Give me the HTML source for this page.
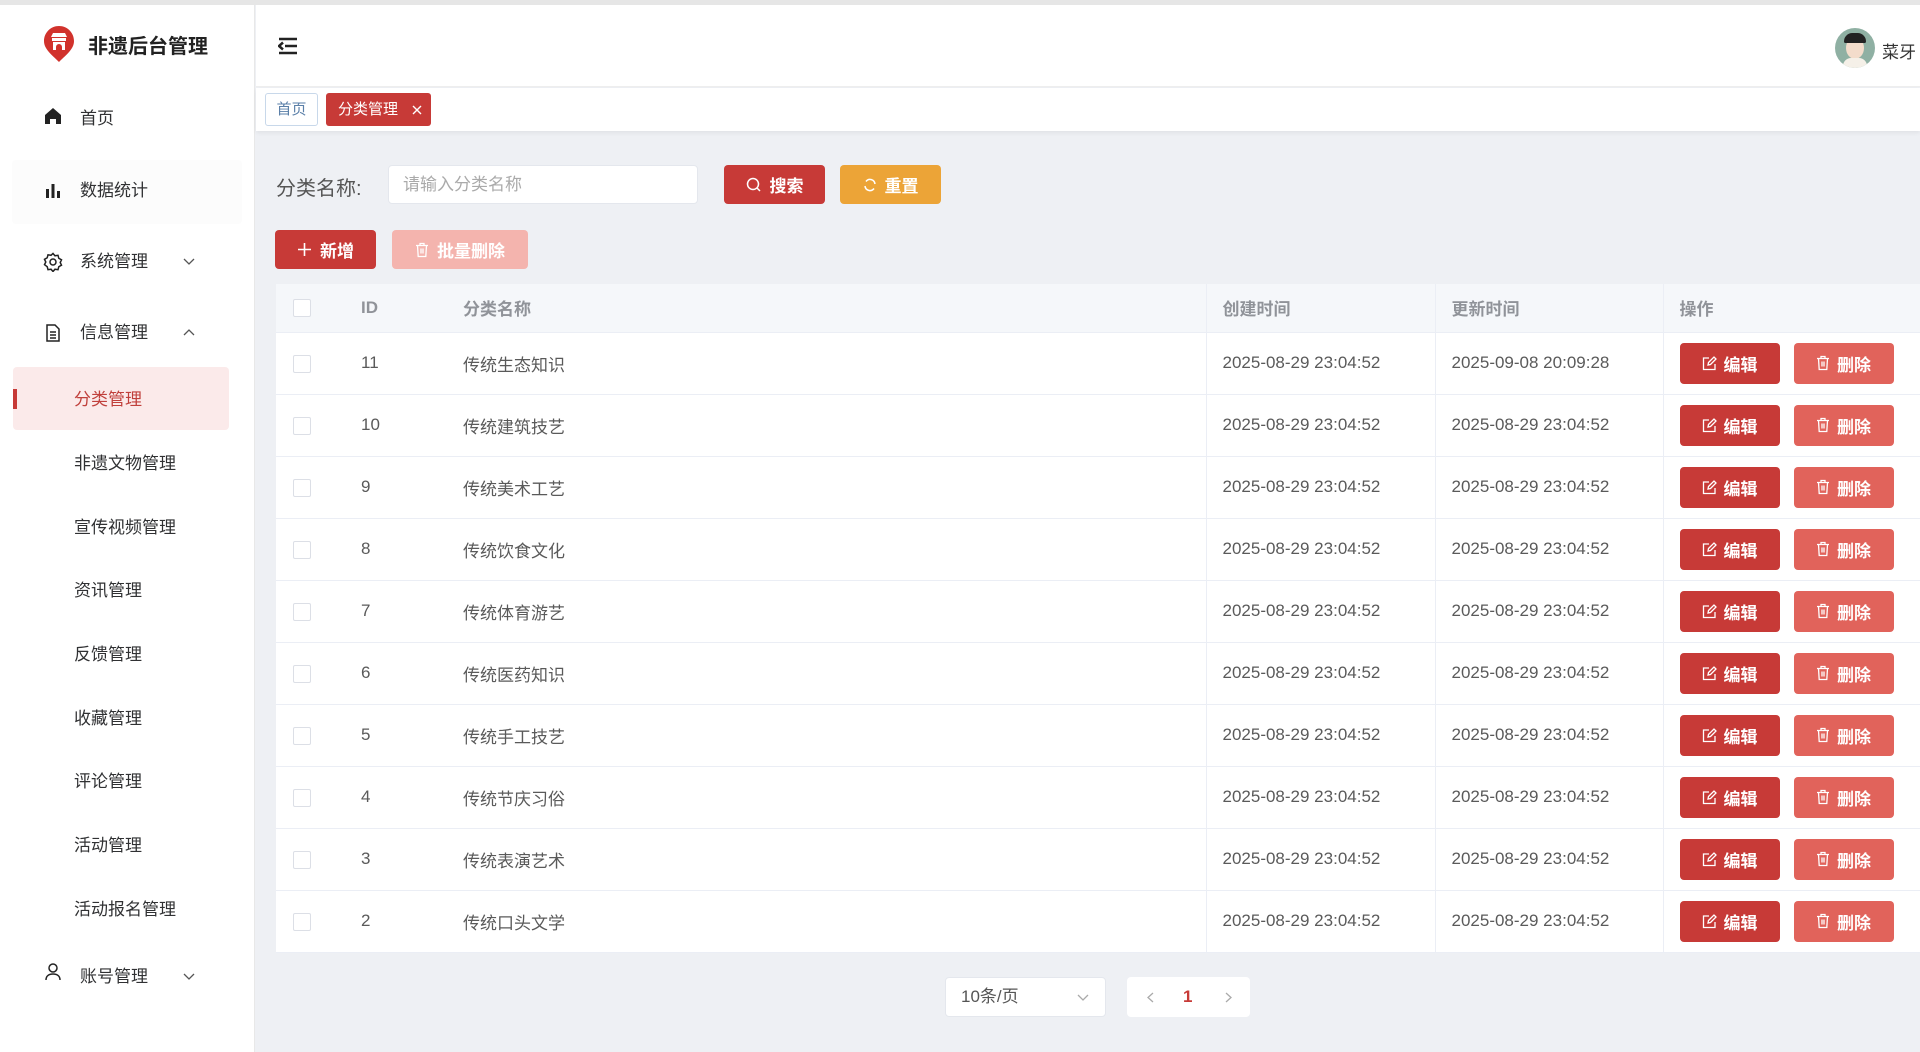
<!DOCTYPE html>
<html><head><meta charset="utf-8">
<style>
*{box-sizing:border-box;margin:0;padding:0}
body{width:1920px;height:1052px;overflow:hidden;background:#eef0f4;font-family:"Liberation Sans","Noto Sans CJK SC",sans-serif;color:#333;position:relative}
.abs{position:absolute}
#topline{left:0;top:0;width:1920px;height:5px;background:#e6e6e6}
#side{left:0;top:5px;width:255px;height:1047px;background:#fff;border-right:1px solid #e8e8e8}
#hdr{left:256px;top:5px;width:1664px;height:82px;background:#fff;border-bottom:1px solid #eee}
#tabs{left:256px;top:88px;width:1664px;height:43px;background:#fff;box-shadow:0 2px 4px rgba(0,0,0,.06)}
.mi{position:absolute;left:80px;font-size:17px;color:#303133;line-height:20px}
.sub{position:absolute;left:74px;font-size:17px;color:#303133;line-height:20px}
.ico{position:absolute;left:43px;width:20px;height:20px}
.arr{position:absolute;left:183px;width:12px;height:8px}
.btn{position:absolute;color:#fff;font-size:17px;font-weight:bold;border-radius:4px;display:flex;align-items:center;justify-content:center;gap:8px}
table{border-collapse:collapse;position:absolute;left:276px;top:284px;width:1644px;background:#fff;font-size:17px}
th{height:48px;background:#f5f7fa;color:#909399;font-weight:bold;text-align:left;border-right:1px solid #ebeef5;border-bottom:1px solid #ebeef5;font-size:17px}
td{height:62px;border-bottom:1px solid #ebeef5;border-right:1px solid #ebeef5;color:#5a5a5a;font-size:17px}
th.c1,td.c1,th.c2,td.c2{border-right:none}
.cb{display:inline-block;width:18px;height:18px;border:1px solid #dcdfe6;border-radius:2px;background:#fff;margin-left:17px;vertical-align:middle}
.eb,.db{display:inline-flex;align-items:center;justify-content:center;gap:7px;width:100px;height:41px;border-radius:4px;color:#fff;font-weight:bold;font-size:17px;vertical-align:middle}
.eb{background:#c73a37;margin-left:16px}.db{background:#e1635b;margin-left:14px}
</style></head><body>
<div id="topline" class="abs"></div>
<div id="side" class="abs">
 <svg class="abs" style="left:43px;top:20px" width="32" height="38" viewBox="0 0 32 38"><path d="M16 1C7.7 1 1 7.7 1 16c0 8 7 13 15 21 8-8 15-13 15-21C31 7.7 24.3 1 16 1z" fill="#d1322c"/><path d="M8 12h16l-2-4H10zM9 13h14v3H9zM10 17h12v8h-3v-3a3 3 0 0 0-6 0v3h-3z" fill="#fff"/></svg>
 <div class="abs" style="left:88px;top:25px;font-size:20px;font-weight:bold;color:#222">非遗后台管理</div>
 <svg class="ico" style="top:101px" viewBox="0 0 20 20"><path d="M2 9L10 2l8 7v9h-5v-5H7v5H2z" fill="#222"/></svg>
 <div class="mi" style="top:104px">首页</div>
 <div class="abs" style="left:12px;top:155px;width:230px;height:64px;background:#fcfcfc;border-radius:4px"></div>
 <svg class="ico" style="top:176px" viewBox="0 0 20 20"><rect x="3" y="8" width="3" height="9" fill="#222"/><rect x="8.5" y="3" width="3" height="14" fill="#222"/><rect x="14" y="10" width="3" height="7" fill="#222"/></svg>
 <div class="mi" style="top:176px">数据统计</div>
 <svg class="ico" style="top:247px" viewBox="0 0 20 20"><circle cx="10" cy="10" r="3" fill="none" stroke="#222" stroke-width="1.5"/><path d="M10 1.5l2 2.3 3-.5.8 3 2.7 1.5-1.3 2.7 1.3 2.7-2.7 1.5-.8 3-3-.5-2 2.3-2-2.3-3 .5-.8-3L1.5 12.7 2.8 10 1.5 7.3l2.7-1.5.8-3 3 .5z" fill="none" stroke="#222" stroke-width="1.5"/></svg>
 <div class="mi" style="top:247px">系统管理</div><svg class="arr" style="top:253px" viewBox="0 0 12 8"><path d="M1 1l5 5 5-5" fill="none" stroke="#555" stroke-width="1.3"/></svg>
 <svg class="ico" style="top:318px" viewBox="0 0 20 20"><path d="M4 2h8l4 4v12H4z M7 9h6M7 12h6M7 15h6" fill="none" stroke="#222" stroke-width="1.5"/></svg>
 <div class="mi" style="top:318px">信息管理</div><svg class="arr" style="top:323px" viewBox="0 0 12 8"><path d="M1 7l5-5 5 5" fill="none" stroke="#555" stroke-width="1.3"/></svg>
 <div class="abs" style="left:13px;top:362px;width:216px;height:63px;background:#fbeaea;border-radius:4px"></div>
 <div class="abs" style="left:13px;top:384px;width:4px;height:20px;background:#c73a37"></div>
 <div class="sub" style="top:385px;color:#c0403c">分类管理</div>
 <div class="sub" style="top:449px">非遗文物管理</div>
 <div class="sub" style="top:513px">宣传视频管理</div>
 <div class="sub" style="top:576px">资讯管理</div>
 <div class="sub" style="top:640px">反馈管理</div>
 <div class="sub" style="top:704px">收藏管理</div>
 <div class="sub" style="top:767px">评论管理</div>
 <div class="sub" style="top:831px">活动管理</div>
 <div class="sub" style="top:895px">活动报名管理</div>
 <svg class="ico" style="top:957px" viewBox="0 0 20 20"><circle cx="10" cy="6" r="4" fill="none" stroke="#222" stroke-width="1.5"/><path d="M3 18c0-4 3-6 7-6s7 2 7 6" fill="none" stroke="#222" stroke-width="1.5"/></svg>
 <div class="mi" style="top:962px">账号管理</div><svg class="arr" style="top:968px" viewBox="0 0 12 8"><path d="M1 1l5 5 5-5" fill="none" stroke="#555" stroke-width="1.3"/></svg>
</div>
<div id="hdr" class="abs">
 <svg class="abs" style="left:22px;top:32px" width="20" height="18" viewBox="0 0 20 18"><path d="M1 2h18M7 9h12M1 16h18M5 5.5L1 9l4 3.5" stroke="#222" stroke-width="2.5" fill="none"/></svg>
 <div class="abs" style="left:1579px;top:23px;width:40px;height:40px;border-radius:50%;background:#8fb0a3;overflow:hidden"><div style="position:absolute;left:11px;top:9px;width:18px;height:22px;border-radius:50%;background:#f3dccb"></div><div style="position:absolute;left:9px;top:5px;width:22px;height:10px;border-radius:10px 10px 2px 2px;background:#222"></div><div style="position:absolute;left:8px;top:30px;width:24px;height:14px;border-radius:8px 8px 0 0;background:#f5f0e8"></div></div>
 <div class="abs" style="left:1626px;top:33px;font-size:17px;color:#333">菜牙</div>
</div>
<div id="tabs" class="abs">
 <div class="abs" style="left:9px;top:5px;width:53px;height:33px;border:1px solid #c8d8ea;border-radius:3px;color:#5a7fa8;font-size:15px;line-height:31px;text-align:center">首页</div>
 <div class="abs" style="left:70px;top:5px;width:105px;height:33px;background:#c73a37;border-radius:3px;color:#fff;font-size:15px;line-height:33px;padding-left:12px">分类管理<svg style="position:absolute;left:86px;top:12px" width="10" height="10" viewBox="0 0 10 10"><path d="M1 1l8 8M9 1l-8 8" stroke="#fff" stroke-width="1.4"/></svg></div>
</div>
<div class="abs" style="left:276px;top:172px;font-size:20px;color:#555">分类名称:</div>
<div class="abs" style="left:388px;top:165px;width:310px;height:39px;background:#fff;border:1px solid #e4e7ed;border-radius:4px;color:#aaa;font-size:17px;line-height:37px;padding-left:14px">请输入分类名称</div>
<div class="btn" style="left:724px;top:165px;width:101px;height:39px;background:#c73a37"><svg width="16" height="16" viewBox="0 0 16 16"><circle cx="7" cy="7" r="5.5" fill="none" stroke="#fff" stroke-width="1.5"/><path d="M11 11l3 3" stroke="#fff" stroke-width="1.5"/></svg>搜索</div>
<div class="btn" style="left:840px;top:165px;width:101px;height:39px;background:#eca437"><svg width="14" height="14" viewBox="0 0 14 14"><path d="M12 6A5 5 0 0 0 3 3.5M2 8a5 5 0 0 0 9 2.5" fill="none" stroke="#fff" stroke-width="1.5"/></svg>重置</div>
<div class="btn" style="left:275px;top:230px;width:101px;height:39px;background:#c73a37"><svg width="15" height="15" viewBox="0 0 15 15"><path d="M7.5 1v13M1 7.5h13" stroke="#fff" stroke-width="1.6"/></svg>新增</div>
<div class="btn" style="left:392px;top:230px;width:136px;height:39px;background:#f4b4ae"><svg width="14" height="16" viewBox="0 0 14 16"><path d="M1 3.5h12M5 3.5V1.5h4v2M2.5 3.5l.7 11h7.6l.7-11M6 6.5v5M8 6.5v5" fill="none" stroke="#fff" stroke-width="1.3"/></svg>批量删除</div>
<table>
<tr><th class="c1" style="width:85px"><span class="cb"></span></th><th class="c2" style="width:86px">ID</th><th style="width:759px;padding-left:16px">分类名称</th><th style="width:229px;padding-left:16px">创建时间</th><th style="width:228px;padding-left:16px">更新时间</th><th style="padding-left:16px;border-right:none">操作</th></tr>
<tbody id="tb"></tbody>
</table>
<script>
var names=["传统生态知识","传统建筑技艺","传统美术工艺","传统饮食文化","传统体育游艺","传统医药知识","传统手工技艺","传统节庆习俗","传统表演艺术","传统口头文学"];
var ed='<svg width="15" height="15" viewBox="0 0 15 15"><path d="M7 2H1.5v11.5H13V8M6 9l.5-2.5L12 1l2 2-5.5 5.5z" fill="none" stroke="#fff" stroke-width="1.3"/></svg>';
var dl='<svg width="14" height="16" viewBox="0 0 14 16"><path d="M1 3.5h12M5 3.5V1.5h4v2M2.5 3.5l.7 11h7.6l.7-11M6 6.5v5M8 6.5v5" fill="none" stroke="#fff" stroke-width="1.3"/></svg>';
var h="";for(var i=0;i<10;i++){var id=11-i;h+='<tr><td class="c1"><span class="cb"></span></td><td class="c2">'+id+'</td><td style="padding-left:16px">'+names[i]+'</td><td style="padding-left:16px">2025-08-29 23:04:52</td><td style="padding-left:16px">'+(i==0?'2025-09-08 20:09:28':'2025-08-29 23:04:52')+'</td><td style="border-right:none"><span class="eb">'+ed+'编辑</span><span class="db">'+dl+'删除</span></td></tr>';}
document.getElementById("tb").innerHTML=h;
</script>
<div class="abs" style="left:945px;top:977px;width:161px;height:40px;background:#fff;border:1px solid #e4e7ed;border-radius:4px;font-size:17px;color:#555;line-height:38px;padding-left:15px">10条/页<svg style="position:absolute;right:16px;top:16px" width="12" height="8" viewBox="0 0 12 8"><path d="M1 1l5 5 5-5" fill="none" stroke="#aaa" stroke-width="1.3"/></svg></div>
<div class="abs" style="left:1127px;top:977px;width:123px;height:40px;background:#fff;border-radius:4px;font-size:17px;line-height:40px"><svg style="position:absolute;left:20px;top:15px" width="7" height="11" viewBox="0 0 7 11"><path d="M6 1L1 5.5 6 10" fill="none" stroke="#aaa" stroke-width="1.3"/></svg><span style="position:absolute;left:56px;color:#c73a37;font-weight:bold">1</span><svg style="position:absolute;left:98px;top:15px" width="7" height="11" viewBox="0 0 7 11"><path d="M1 1l5 4.5L1 10" fill="none" stroke="#aaa" stroke-width="1.3"/></svg></div>
</body></html>
